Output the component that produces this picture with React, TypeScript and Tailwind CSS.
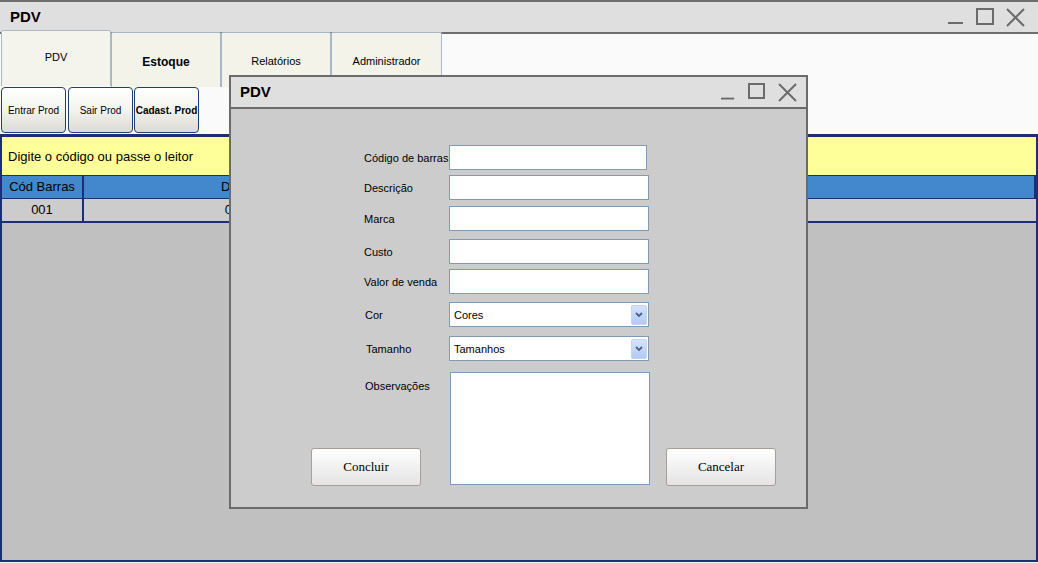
import type { ReactNode } from "react";

function WinControls({ size }: { size: "main" | "dialog" }) {
  const big = size === "main";
  return (
    <div className={big ? "flex items-center gap-[12px] pr-[13px]" : "flex items-center gap-[12px] pr-[9px]"}>
      <svg width={big ? 16 : 15} height="18" viewBox="0 0 16 18">
        <rect x="0" y={big ? 14 : 15} width={big ? 15 : 14} height="2" fill="#6b6b6b" />
      </svg>
      <svg width="18" height="18" viewBox="0 0 18 18">
        <rect x="1" y="1" width={big ? 16 : 15} height={big ? 15 : 14} fill="none" stroke="#6b6b6b" strokeWidth="2" />
      </svg>
      <svg width="19" height="19" viewBox="0 0 19 19">
        <path d="M1 1 L18 18 M18 1 L1 18" stroke="#6b6b6b" strokeWidth="2" />
      </svg>
    </div>
  );
}

function Tab({ label, active, bold, w }: { label: string; active?: boolean; bold?: boolean; w: string }) {
  return (
    <div
      className={
        (active
          ? "-mt-[2px] h-[56px] pb-[3px] z-10 bg-[#f4f4ec] "
          : "h-[55px] bg-[#f3f3ea] pt-[3px] ") +
        w +
        " flex items-center justify-center border-x border-t border-[#a9b8c8] rounded-t-[2px] text-black " +
        (bold ? "text-[12px] font-bold" : "text-[11px]")
      }
    >
      {label}
    </div>
  );
}

function ToolButton({ label, bold, ml = "ml-0" }: { label: string; bold?: boolean; ml?: string }) {
  return (
    <button
      className={
        "h-[46px] w-[65px] rounded-[4px] border border-[#1d4073] bg-gradient-to-b from-[#ffffff] via-[#f3f3ef] to-[#dcdad2] text-[10px] text-black whitespace-nowrap " +
        ml +
        (bold ? " font-bold" : "")
      }
    >
      {label}
    </button>
  );
}

function Field({ label, children, mt, lp = "pl-0" }: { label: string; children: ReactNode; mt: string; lp?: string }) {
  return (
    <div className={"flex items-center pl-[133px] " + mt}>
      <div className={"w-[85px] pt-[2px] text-[11px] text-black whitespace-nowrap " + lp}>{label}</div>
      {children}
    </div>
  );
}

function Input({ w = "w-[200px]" }: { w?: string }) {
  return <div className={"h-[25px] border border-[#7f9bb8] bg-white " + w} />;
}

function Select({ value }: { value: string }) {
  return (
    <div className="h-[25px] w-[200px] border border-[#7f9bb8] bg-white flex items-center justify-between pl-[4px] pr-[1px]">
      <span className="text-[11px] text-black pt-[1px]">{value}</span>
      <div className="h-[20px] w-[16px] rounded-[2px] border border-[#c5d4f3] bg-gradient-to-b from-[#d6e3fe] to-[#b3c8f5] flex items-center justify-center">
        <svg width="8" height="6" viewBox="0 0 8 6">
          <path d="M1 1 L4 4 L7 1" fill="none" stroke="#4d6185" strokeWidth="1.8" />
        </svg>
      </div>
    </div>
  );
}

function DialogButton({ label }: { label: string }) {
  return (
    <button className="h-[38px] w-[110px] rounded-[3px] border border-[#a89f94] bg-gradient-to-b from-[#ffffff] via-[#f1f1f1] to-[#e4e4e4] font-['Liberation_Serif',serif] text-[13px] text-black">
      {label}
    </button>
  );
}

export default function App() {
  return (
    <div className="relative h-[563px] w-[1038px] overflow-hidden bg-[#fafafa] font-['Liberation_Sans',Arial,sans-serif] flex flex-col">
      {/* title bar */}
      <div className="h-[32px] shrink-0 border-t-2 border-[#6d6d6d] bg-[#dfdfdf] flex items-center justify-between">
        <span className="pl-[10px] pt-[1px] text-[15px] font-bold text-black">PDV</span>
        <WinControls size="main" />
      </div>

      {/* tabs */}
      <div className="h-[55px] shrink-0 flex items-start border-t-2 border-[#6d6d6d] pl-[1px]">
        <div className="-mt-[2px] flex">
          <Tab label="PDV" active w="w-[110px]" />
          <Tab label="Estoque" bold w="w-[110px]" />
          <Tab label="Relatórios" w="w-[110px]" />
          <Tab label="Administrador" w="w-[111px]" />
        </div>
      </div>

      {/* toolbar */}
      <div className="h-[47px] shrink-0 flex pl-[1px]">
        <ToolButton label="Entrar Prod" />
        <ToolButton label="Sair Prod" ml="ml-[2px]" />
        <ToolButton label="Cadast. Prod" bold ml="ml-[1px]" />
      </div>

      {/* product panel */}
      <div className="flex-1 flex flex-col bg-[#1c2e78] pl-[2px] pr-[2px] pt-[3px] pb-[2px] mb-[1px]">
        <div className="h-[38px] shrink-0 bg-[#ffff99] flex items-center pl-[6px] pt-[1px] text-[13px] text-black">
          Digite o código ou passe o leitor
        </div>
        <div className="mt-[1px] h-[22px] shrink-0 flex gap-[2px] pr-[2px] text-[13px] text-black">
          <div className="w-[80px] bg-[#4387cc] flex items-center justify-center">Cód Barras</div>
          <div className="w-[332px] bg-[#4387cc] flex items-center justify-center">Descrição</div>
          <div className="flex-1 bg-[#4387cc] flex items-center justify-center">Preço</div>
        </div>
        <div className="mt-[1px] h-[22px] shrink-0 flex gap-[2px] text-[13px] text-black">
          <div className="w-[80px] bg-[#cccccc] flex items-center justify-center">001</div>
          <div className="w-[332px] bg-[#cccccc] flex items-center justify-center">0000000</div>
          <div className="flex-1 bg-[#cccccc] flex items-center justify-center">0,00</div>
        </div>
        <div className="mt-[2px] flex-1 bg-[#c0c0c0]" />
      </div>

      {/* dialog */}
      <div className="absolute left-[229px] top-[75px] z-20 h-[434px] w-[579px] border-2 border-[#6b6b6b] bg-[#cccccc] flex flex-col">
        <div className="h-[32px] shrink-0 border-b-2 border-[#6b6b6b] bg-[#dfdfdf] flex items-center justify-between">
          <span className="pl-[9px] pt-[1px] text-[15px] font-bold text-black">PDV</span>
          <WinControls size="dialog" />
        </div>
        <div className="flex flex-col">
          <Field label="Código de barras" mt="mt-[36px]">
            <Input w="w-[198px]" />
          </Field>
          <Field label="Descrição" mt="mt-[5px]">
            <Input />
          </Field>
          <Field label="Marca" mt="mt-[6px]">
            <Input />
          </Field>
          <Field label="Custo" mt="mt-[8px]">
            <Input />
          </Field>
          <Field label="Valor de venda" mt="mt-[5px]">
            <Input />
          </Field>
          <Field label="Cor" mt="mt-[8px]" lp="pl-[1px]">
            <Select value="Cores" />
          </Field>
          <Field label="Tamanho" mt="mt-[9px]" lp="pl-[2px]">
            <Select value="Tamanhos" />
          </Field>
          <div className="mt-[11px] flex">
            <div className="w-[218px] flex flex-col justify-between">
              <span className="pl-[134px] pt-[6px] text-[11px] text-black whitespace-nowrap">Observações</span>
              <div className="pl-[80px] -mb-[1px]">
                <DialogButton label="Concluir" />
              </div>
            </div>
            <div className="ml-[1px] h-[113px] w-[200px] border border-[#7f9bb8] bg-white" />
            <div className="ml-[16px] self-end -mb-[1px]">
              <DialogButton label="Cancelar" />
            </div>
          </div>
        </div>
      </div>
    </div>
  );
}
